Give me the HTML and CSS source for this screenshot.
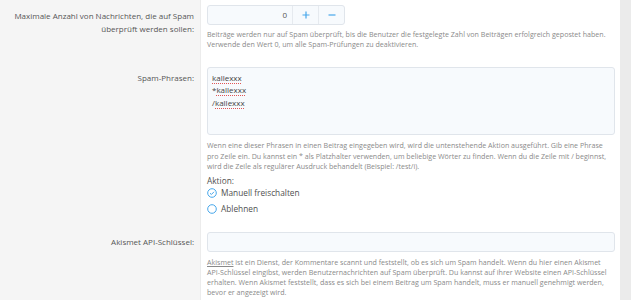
FILE: index.html
```html
<!DOCTYPE html>
<html lang="de">
<head>
<meta charset="utf-8">
<link rel="stylesheet" href="styles.css">
</head>
<body>
<div class="page">
  <div class="row row-first">
    <div class="label">Maximale Anzahl von Nachrichten, die auf Spam überprüft werden sollen:</div>
    <div class="field">
      <div class="spinner">
        <div class="num">0</div>
        <div class="btn"><svg viewBox="0 0 8 8" width="8" height="8"><path d="M4 0.5 V7.5 M0.5 4 H7.5" stroke="#47a7eb" stroke-width="1.2"/></svg></div>
        <div class="btn"><svg viewBox="0 0 8 8" width="8" height="8"><path d="M0.5 4 H7.5" stroke="#47a7eb" stroke-width="1.2"/></svg></div>
      </div>
      <div class="hint">Beiträge werden nur auf Spam überprüft, bis die Benutzer die festgelegte Zahl von Beiträgen erfolgreich gepostet haben. Verwende den Wert 0, um alle Spam-Prüfungen zu deaktivieren.</div>
    </div>
  </div>
  <div class="row row-second">
    <div class="label">Spam-Phrasen:</div>
    <div class="field">
      <div class="textarea">
        <div><span class="spell">kallexxx</span></div>
        <div>*<span class="spell">kallexxx</span></div>
        <div>/<span class="spell">kallexxx</span></div>
      </div>
      <div class="hint hint-wide">Wenn eine dieser Phrasen in einen Beitrag eingegeben wird, wird die untenstehende Aktion ausgeführt. Gib eine Phrase pro Zeile ein. Du kannst ein * als Platzhalter verwenden, um beliebige Wörter zu finden. Wenn du die Zeile mit / beginnst, wird die Zeile als regulärer Ausdruck behandelt (Beispiel: /test/i).</div>
      <div class="action-title">Aktion:</div>
      <div class="radio">
        <svg class="radio-icon" viewBox="0 0 10 10" width="10" height="10"><circle cx="5" cy="5" r="4.3" fill="none" stroke="#47a7eb" stroke-width="1"/><path d="M3 5.2 L4.4 6.5 L7 3.8" fill="none" stroke="#47a7eb" stroke-width="1"/></svg>
        <span>Manuell freischalten</span>
      </div>
      <div class="radio radio-second">
        <svg class="radio-icon" viewBox="0 0 10 10" width="10" height="10"><circle cx="5" cy="5" r="4.3" fill="none" stroke="#47a7eb" stroke-width="1"/></svg>
        <span>Ablehnen</span>
      </div>
    </div>
  </div>
  <div class="row row-third">
    <div class="label">Akismet API-Schlüssel:</div>
    <div class="field">
      <div class="input"></div>
      <div class="hint hint-last"><span class="link">Akismet</span> ist ein Dienst, der Kommentare scannt und feststellt, ob es sich um Spam handelt. Wenn du hier einen Akismet API-Schlüssel eingibst, werden Benutzernachrichten auf Spam überprüft. Du kannst auf ihrer Website einen API-Schlüssel erhalten. Wenn Akismet feststellt, dass es sich bei einem Beitrag um Spam handelt, muss er manuell genehmigt werden, bevor er angezeigt wird.</div>
    </div>
  </div>
</div>
</body>
</html>
```
FILE: styles.css
```css
html, body {
  margin: 0;
  padding: 0;
}
body {
  background: #ebebeb;
  font-family: "Open Sans", "Noto Sans", sans-serif;
  color: #505050;
  width: 631px;
  height: 300px;
  overflow: hidden;
}
.page {
  width: 620px;
  background: #fff;
}
.row {
  display: grid;
  grid-template-columns: 201px 1fr;
}
.label {
  background: #f5f5f5;
  border-right: 1px solid #ececec;
  text-align: right;
  font-size: 8px;
  line-height: 13px;
  padding: 3.5px 6px 0 8px;
  color: #555;
}
.row-first .label { padding-top: 8.5px; }
.row-first .field { padding-top: 5px; padding-bottom: 18px; }
.row-second .label { padding-top: 3.5px; }
.row-second .field { padding-bottom: 12px; }
.row-third .label { padding-top: 8.5px; }
.row-third .field { padding-top: 5px; padding-bottom: 10px; }
.field {
  padding: 0 5px 0 6px;
}
.spinner {
  display: flex;
  width: 138px;
  height: 20px;
  box-sizing: border-box;
  border: 1px solid #e0e5eb;
  border-radius: 3px;
  background: #f7fafd;
  font-size: 8px;
}
.num {
  flex: 1;
  text-align: right;
  padding-right: 5px;
  line-height: 18px;
  color: #555;
}
.btn {
  width: 25px;
  border-left: 1px solid #e6eaef;
  display: flex;
  align-items: center;
  justify-content: center;
}
.hint {
  font-size: 7.1px;
  line-height: 10px;
  color: #8a8a8a;
  margin-top: 4px;
}
.hint-wide { margin-top: 5px; line-height: 10.5px; }
.textarea {
  height: 68px;
  box-sizing: border-box;
  border: 1px solid #e0e5eb;
  border-radius: 3px;
  background: #f7fafd;
  padding: 3.5px 4px;
  font-size: 8px;
  line-height: 12.5px;
  color: #444;
}
.spell {
  background-image: linear-gradient(90deg, #e05555 50%, transparent 50%);
  background-size: 2px 1px;
  background-repeat: repeat-x;
  background-position: 0 100%;
  padding-bottom: 1px;
}
.action-title {
  font-size: 8.3px;
  line-height: 12px;
  margin-top: 3px;
  color: #505050;
}
.radio {
  display: flex;
  align-items: center;
  gap: 4px;
  font-size: 8.3px;
  line-height: 12px;
  color: #505050;
}
.radio-second { margin-top: 4px; }
.radio-icon { flex: none; }
.input {
  height: 20px;
  box-sizing: border-box;
  border: 1px solid #e0e5eb;
  border-radius: 3px;
  background: #f7fafd;
}
.hint-last { margin-top: 5px; }
.link { text-decoration: underline; }
```
